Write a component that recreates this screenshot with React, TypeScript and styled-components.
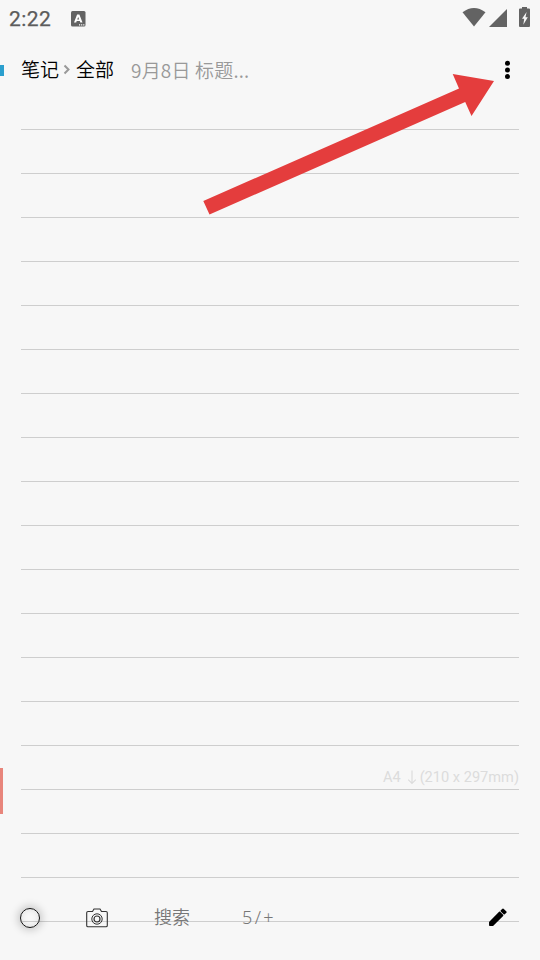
import styled, { createGlobalStyle } from "styled-components";

const GlobalStyle = createGlobalStyle`
    * {
        box-sizing: border-box;
    }
    body {
        margin: 0;
        background: #f7f7f7;
        font-family: Roboto, "Noto Sans CJK SC", sans-serif;
    }
    svg {
        display: block;
    }
`;

const Screen = styled.div`
    position: relative;
    display: flex;
    flex-direction: column;
    width: 540px;
    height: 960px;
    overflow: hidden;
    background: #f7f7f7;
`;

const StatusBar = styled.div`
    display: flex;
    align-items: center;
    height: 37px;
    padding: 0 9px;
    color: #636363;
`;

const Clock = styled.span`
    width: 62px;
    padding-top: 1px;
    font-size: 21px;
    font-weight: 400;
    letter-spacing: 0.4px;
    line-height: 36px;
    color: #5c5c5c;
    -webkit-text-stroke: 0.25px #5c5c5c;
`;

const StatusIcons = styled.div`
    display: flex;
    margin-left: auto;
    padding-bottom: 4px;
`;

const Header = styled.header`
    display: flex;
    align-items: center;
    height: 66px;
    font-size: 19px;
    line-height: 28px;
`;

const Marker = styled.i`
    width: 4px;
    height: 11px;
    margin-right: 17px;
    background: #2b9fce;
`;

const Crumb = styled.span`
    width: 38px;
    font-family: "Noto Sans CJK SC DemiLight", "Noto Sans CJK SC", sans-serif;
    font-weight: 350;
    white-space: nowrap;
    color: #000;
    margin-top: -2px;
`;

const Chevron = styled.svg`
    margin: -2px 5px 0 4px;
`;

const Title = styled.span`
    margin-left: 17px;
    font-family: "Noto Sans CJK SC DemiLight", "Noto Sans CJK SC", sans-serif;
    font-weight: 350;
    letter-spacing: 0.2px;
    color: #999;
`;

const MenuButton = styled.button`
    margin: 0 29px 0 auto;
    padding: 0;
    border: 0;
    background: none;
`;

const Paper = styled.main`
    display: flex;
    flex-direction: column;
    padding: 0 21px;
    margin-top: -17px;
`;

const Line = styled.div`
    display: flex;
    flex: none;
    justify-content: flex-end;
    align-items: flex-end;
    height: 44px;
    border-bottom: 1px solid #cecece;
`;

const PageSize = styled.span`
    display: flex;
    align-items: center;
    font-size: 14.6px;
    line-height: 24px;
    color: #dcdcdc;
`;

const PageArrow = styled.svg`
    margin: 0 3px 0 6px;
`;

const Bookmark = styled.i`
    position: absolute;
    left: 0;
    top: 768px;
    width: 3px;
    height: 46px;
    background: #e8857b;
`;

const Toolbar = styled.footer`
    position: absolute;
    left: 0;
    right: 0;
    bottom: 17px;
    display: flex;
    align-items: center;
    height: 51px;
    padding: 0 32px 0 10px;
    font-family: "Noto Sans CJK SC DemiLight", "Noto Sans CJK SC", sans-serif;
    font-size: 18px;
    font-weight: 350;
    line-height: 26px;
    color: #777;
`;

const RecordButton = styled.span`
    width: 20px;
    height: 20px;
    margin: 0 46px 0 10px;
    border: 1.4px solid #111;
    border-radius: 50%;
    box-shadow: 0 0 9px 2px rgba(0, 0, 0, 0.2), inset 0 0 6px rgba(0, 0, 0, 0.1);
`;

const Search = styled.span`
    width: 36px;
    margin: -3px 0 0 46px;
    white-space: nowrap;
`;

const PageCount = styled.span`
    margin: -2px 0 0 52px;
    font-family: "Noto Sans", sans-serif;
    letter-spacing: 2.4px;
`;

const PencilIcon = styled.svg`
    margin: -1px 0 0 auto;
`;

const Pointer = styled.svg`
    position: absolute;
    left: 200px;
    top: 70px;
`;

const LINE_COUNT = 19;
const PAGE_SIZE_LINE = 15;

const App = () => {
    return (
        <>
            <GlobalStyle />
            <Screen>
                <StatusBar>
                    <Clock>2:22</Clock>
                    <svg width="15" height="16" viewBox="0 0 15 16">
                        <rect width="14.500" height="15.500" rx="1.500" fill="#636363" />
                        <path
                            d="M3 11.500 6.100 3.600h2.300l3.100 7.900H9.300l-.5-1.400H5.700l-.5 1.400zM6.200 8.600h2L7.200 5.900z"
                            fill="#fff"
                            fillRule="evenodd"
                        />
                        <path d="M8 13.200h1.200v1.200H8zM10.100 13.200h1.200v1.200h-1.200zM12.200 13.200h1.200v1.200h-1.200z" fill="#fff" />
                    </svg>
                    <StatusIcons>
                        <svg width="69" height="22" viewBox="462 6 69 22" fill="#636363">
                            <path d="M462.500 12.300Q474 3.700 485.500 12.300L474 26.500Z" />
                            <path d="M507 9v18h-18z" />
                            <path d="M522 7h5v1.500h2q1 0 1 1V26q0 1-1 1h-9q-1 0-1-1V9.500q0-1 1-1h2z" />
                            <path d="m526.600 12-4.600 6.800h2.200l-.900 6 4.500-7.500h-2.300z" fill="#f7f7f7" />
                        </svg>
                    </StatusIcons>
                </StatusBar>
                <Header>
                    <Marker />
                    <Crumb>笔记</Crumb>
                    <Chevron width="8" height="11" viewBox="0 0 8 11">
                        <path d="m1.500 1.500 4 4-4 4" fill="none" stroke="#999" strokeWidth="2" />
                    </Chevron>
                    <Crumb>全部</Crumb>
                    <Title>9月8日 标题...</Title>
                    <MenuButton>
                        <svg width="7" height="20" viewBox="0 0 7 20">
                            <circle cx="3.500" cy="3.200" r="2.500" />
                            <circle cx="3.500" cy="9.900" r="2.500" />
                            <circle cx="3.500" cy="16.600" r="2.500" />
                        </svg>
                    </MenuButton>
                </Header>
                <Paper>
                    {Array.from({ length: LINE_COUNT }, (_, i) => (
                        <Line key={i}>
                            {i === PAGE_SIZE_LINE && (
                                <PageSize>
                                    A4
                                    <PageArrow width="10" height="15" viewBox="0 0 10 15">
                                        <path d="M5 .5v13M1.200 9.700 5 13.500l3.800-3.800" fill="none" stroke="#dcdcdc" strokeWidth="1.200" />
                                    </PageArrow>
                                    (210 x 297mm)
                                </PageSize>
                            )}
                        </Line>
                    ))}
                </Paper>
                <Bookmark />
                <Toolbar>
                    <RecordButton />
                    <svg width="22" height="20" viewBox="0 0 22 20" fill="none" stroke="#333">
                        <path d="M2 3.500h4.500L8 1h6l1.500 2.500H20q1.300 0 1.300 1.300v12.700q0 1.300-1.300 1.300H2Q.7 18.800.7 17.500V4.800Q.7 3.500 2 3.500Z" strokeWidth="1.100" />
                        <circle cx="11" cy="11" r="5.200" />
                        <circle cx="11" cy="11" r="3" strokeWidth="1.200" />
                    </svg>
                    <Search>搜索</Search>
                    <PageCount>5/+</PageCount>
                    <PencilIcon width="20" height="20" viewBox="0 0 20 20">
                        <path
                            d="M1.800 15.200 11.600 5.400l3 3-9.800 9.800h-3zM13.300 3.900 15 2.200l2.900 2.900-1.700 1.700z"
                            stroke="#000"
                            strokeWidth="1.500"
                            strokeLinejoin="round"
                        />
                    </PencilIcon>
                </Toolbar>
                <Pointer width="296" height="148" viewBox="200 70 296 148">
                    <path d="M203.300 201 459 88.500 452.700 74 494 81 471.500 116 465.200 102 209.500 214.500Z" fill="#e43d3d" />
                </Pointer>
            </Screen>
        </>
    );
};

export default App;
